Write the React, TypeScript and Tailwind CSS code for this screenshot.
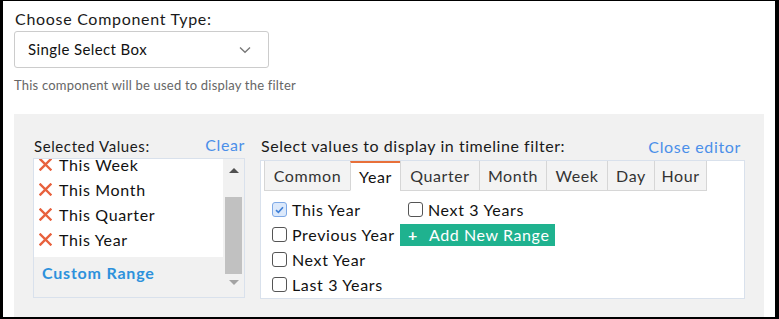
import React from 'react';

const tabs = [
    { name: 'Common', w: 'w-[87px]' },
    { name: 'Year', w: 'w-[51px]' },
    { name: 'Quarter', w: 'w-[80px]' },
    { name: 'Month', w: 'w-[68px]' },
    { name: 'Week', w: 'w-[62px]' },
    { name: 'Day', w: 'w-[48px]' },
    { name: 'Hour', w: 'w-[53px]' },
];
const selected = ['This Week', 'This Month', 'This Quarter', 'This Year'];

const RedX = () => (
    <svg width="13" height="13" viewBox="0 0 13 13" className="shrink-0">
        <path d="M1.5 1.5 L11.5 11.5 M11.5 1.5 L1.5 11.5" stroke="#e8613d" strokeWidth="2.4" strokeLinecap="square" />
    </svg>
);

const Checkbox = ({ checked }: { checked?: boolean }) => (
    <span
        className={`w-[15px] h-[15px] rounded-[3px] border shrink-0 flex items-center justify-center ${
            checked ? 'border-[#7ea9e6] bg-[#dce9fb]' : 'border-[#555] bg-white'
        }`}
    >
        {checked && (
            <svg width="9" height="8" viewBox="0 0 9 8">
                <path d="M1 4.2 L3.4 6.4 L8 1.2" stroke="#3f7fd6" strokeWidth="1.6" fill="none" />
            </svg>
        )}
    </span>
);

const CheckRow = ({ label, checked }: { label: string; checked?: boolean }) => (
    <div className="h-[25px] flex items-center gap-[5px]">
        <Checkbox checked={checked} />
        <span className="text-[16px] tracking-[0.65px] text-[#111] whitespace-nowrap">{label}</span>
    </div>
);

export default function App() {
    return (
        <div
            className="w-[779px] h-[319px] bg-white border-black border-l-[3px] border-t border-r-4 border-b-2 pl-[11px] pt-[6px] overflow-hidden"
            style={{ fontFamily: 'Lato, "Open Sans", sans-serif' }}
        >
            <div className="pl-px text-[16px] tracking-[0.7px] leading-[24px] text-[#1a1a1a]">Choose Component Type:</div>
            <div className="w-[255px] h-[37px] border border-[#ccc] rounded-[3px] flex items-center justify-between pl-[13px] pr-[17px] text-[15px] tracking-[0.4px] text-[#111]">
                <span>Single Select Box</span>
                <svg width="12" height="8" viewBox="0 0 12 8">
                    <path d="M1 1.5 L6 6.3 L11 1.5" stroke="#777" strokeWidth="1.3" fill="none" />
                </svg>
            </div>
            <div className="mt-[8px] text-[13px] tracking-[0.2px] leading-[18px] text-[#666]">This component will be used to display the filter</div>

            <div className="mt-[20px] w-[750px] h-[210px] bg-[#f1f1f1] pl-[19px] pt-[21px] flex gap-[15px]">
                {/* Selected values */}
                <div className="w-[212px] flex flex-col">
                    <div className="flex items-end justify-between h-[23px] pb-[3px]">
                        <span className="pl-px text-[15px] tracking-[0.6px] text-[#1a1a1a] leading-[18px]">Selected Values:</span>
                        <span className="text-[16px] tracking-[0.6px] text-[#4b8fe9] leading-[22px] -mb-px">Clear</span>
                    </div>
                    <div className="h-[140px] border border-[#d9e1ec] flex overflow-hidden">
                        <div className="w-[189px] flex flex-col overflow-hidden">
                            <div className="bg-white h-[98px] overflow-hidden">
                                <div className="-mt-[7px] pl-[5px]">
                                    {selected.map((s) => (
                                        <div key={s} className="h-[25px] flex items-center gap-[7px]">
                                            <RedX />
                                            <span className="text-[16px] tracking-[0.65px] text-[#111]">{s}</span>
                                        </div>
                                    ))}
                                </div>
                            </div>
                            <div className="pl-[8px] pt-[4px] text-[16px] tracking-[0.8px] font-bold text-[#2d91dc] leading-[24px]">Custom Range</div>
                        </div>
                        <div className="w-[21px] bg-[#f1f1f1] flex flex-col items-center pt-[9px]">
                            <div className="w-0 h-0 border-l-[5px] border-r-[5px] border-b-[5px] border-l-transparent border-r-transparent border-b-[#505050]" />
                            <div className="mt-[24px] w-[17px] h-[77px] bg-[#c1c1c1]" />
                            <div className="mt-[6px] w-0 h-0 border-l-[5px] border-r-[5px] border-t-[5px] border-l-transparent border-r-transparent border-t-[#a3a3a3]" />
                        </div>
                    </div>
                </div>

                {/* Timeline values */}
                <div className="w-[485px] flex flex-col">
                    <div className="flex items-end justify-between h-[25px] pb-[3px] pr-[4px]">
                        <span className="pl-px text-[16px] tracking-[0.55px] text-[#1a1a1a] leading-[22px]">Select values to display in timeline filter:</span>
                        <span className="text-[16px] tracking-[0.65px] text-[#4b8fe9] leading-[22px] -mb-px">Close editor</span>
                    </div>
                    <div className="h-[139px] border border-[#d9e1ec] bg-white pl-[3px]">
                        <div className="flex">
                            {tabs.map((t) => (
                                <div
                                    key={t.name}
                                    className={`${t.w} h-[30px] flex items-center justify-center text-[16px] tracking-[0.6px] border-l border-r border-b -mr-px ${
                                        t.name === 'Year'
                                            ? 'bg-white text-[#111] border-[#d6d6d6] border-b-white border-t-2 border-t-[#e8703a]'
                                            : 'bg-[#f3f3f3] text-[#333] border-[#d6d6d6] border-t-0'
                                    }`}
                                >
                                    {t.name}
                                </div>
                            ))}
                        </div>
                        <div className="flex pl-[8px] pt-[6px]">
                            <div className="w-[128px]">
                                <CheckRow label="This Year" checked />
                                <CheckRow label="Previous Year" />
                                <CheckRow label="Next Year" />
                                <CheckRow label="Last 3 Years" />
                            </div>
                            <div>
                                <div className="pl-[8px]">
                                    <CheckRow label="Next 3 Years" />
                                </div>
                                <div className="h-[22px] mt-[1.5px] w-[155px] bg-[#1fb28f] text-white text-[16px] tracking-[0.6px] flex items-center pl-[8px] gap-[11px]">
                                    <span className="font-bold">+</span>
                                    <span>Add New Range</span>
                                </div>
                            </div>
                        </div>
                    </div>
                </div>
            </div>
        </div>
    );
}
